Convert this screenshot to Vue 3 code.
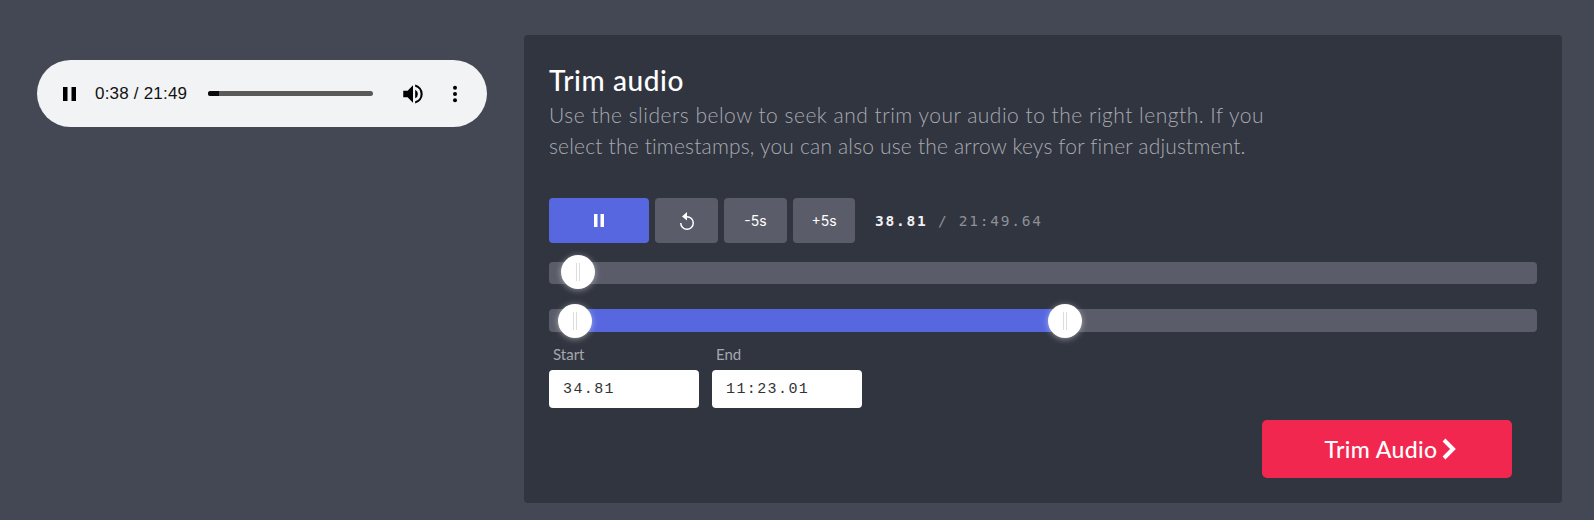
<template>
  <div class="page">
    <div class="left">
      <div class="player">
        <svg class="p-pause" width="13" height="14" viewBox="0 0 13 14"><path d="M0 0h4.500v14H0zM8.500 0H13v14H8.500z" fill="#000"/></svg>
        <span class="p-time">0:38 / 21:49</span>
        <div class="p-track"><div class="p-fill"></div></div>
        <svg class="p-vol" width="26" height="26" viewBox="0 0 24 24"><path d="M3 9v6h4l5 5V4L7 9H3zm13.500 3A4.500 4.500 0 0 0 14 7.970v8.050A4.470 4.470 0 0 0 16.500 12zM14 3.230v2.060a7 7 0 0 1 0 13.420v2.060a9 9 0 0 0 0-17.540z" fill="#000"/></svg>
        <svg class="p-more" width="6" height="18" viewBox="0 0 6 18"><circle cx="3" cy="2.700" r="2"/><circle cx="3" cy="9" r="2"/><circle cx="3" cy="15.300" r="2"/></svg>
      </div>
    </div>
    <section class="panel">
      <h1>Trim audio</h1>
      <p class="desc"><span class="line1">Use the sliders below to seek and trim your audio to the right length. If you</span><span class="line2">select the timestamps, you can also use the arrow keys for finer adjustment.</span></p>
      <div class="controls">
        <button class="btn play"><svg width="12" height="13" viewBox="0 0 12 13"><path d="M1 0h3.500v13H1zM7.500 0H11v13H7.500z" fill="#fff"/></svg></button>
        <button class="btn replay"><svg width="18" height="20" viewBox="0 0 18 20"><path d="M9 5V1L4 5.500 9 9.500V6.500a5.500 5.500 0 1 1-5.500 5.500H2a7 7 0 1 0 7-7z" fill="#fff"/></svg></button>
        <button class="btn minus">-5s</button>
        <button class="btn plus">+5s</button>
        <span class="clock"><b>38.81</b> / 21:49.64</span>
      </div>
      <div class="slider seek">
        <div class="thumb" :style="{ left: '29px' }"></div>
      </div>
      <div class="slider range">
        <div class="fill" :style="{ left: '26px', width: '490px' }"></div>
        <div class="thumb" :style="{ left: '26px' }"></div>
        <div class="thumb" :style="{ left: '516px' }"></div>
      </div>
      <div class="fields">
        <label class="field"><span>Start</span><input value="34.81" /></label>
        <label class="field"><span>End</span><input value="11:23.01" /></label>
      </div>
      <div class="actions">
        <button class="trim">Trim Audio<svg width="18" height="24" viewBox="0 0 18 24"><path d="M4 3l9 9-9 9" fill="none" stroke="#fff" stroke-width="4"/></svg></button>
      </div>
    </section>
  </div>
</template>

<script setup>
</script>

<style>
html, body { margin: 0; background: #434854; }
</style>

<style scoped>
.page {
  box-sizing: border-box;
  width: 1594px;
  height: 520px;
  padding: 35px 33px 17px 37px;
  display: flex;
  gap: 37px;
  background: #434854;
  overflow: hidden;
}
.left { width: 450px; flex: none; padding-top: 25px; }
.player {
  height: 67px;
  border-radius: 34px;
  background: #f1f3f4;
  display: flex;
  align-items: center;
  padding-left: 26px;
  box-sizing: border-box;
  font-family: "Liberation Sans", Arial, sans-serif;
}
.p-pause { flex: none; }
.p-time { margin-left: 19px; font-size: 17px; letter-spacing: .2px; color: #111; white-space: nowrap; width: 113px; flex: none; }
.p-track { width: 165px; height: 5px; border-radius: 3px; background: #595959; flex: none; position: relative; overflow: hidden; }
.p-fill { width: 11px; height: 100%; background: #0b0b0b; }
.p-vol { margin-left: 27px; flex: none; }
.p-more { margin-left: 26px; flex: none; }

.panel {
  flex: 1;
  box-sizing: border-box;
  background: #313540;
  border-radius: 4px;
  padding: 26px 25px 25px;
  font-family: "Lato", "Open Sans", sans-serif;
  color: #fff;
  display: flex;
  flex-direction: column;
}
h1 { margin: 0; font-size: 28px; font-weight: 500; letter-spacing: .6px; line-height: 39px; color: #fff; }
.desc { margin: 0; font-size: 21px; line-height: 30.500px; color: #a8aab1; font-weight: 300; white-space: nowrap; }
.line1 { display: block; letter-spacing: .5px; }
.line2 { display: block; letter-spacing: .18px; }
.controls { display: flex; align-items: center; gap: 6px; margin-top: 37px; height: 45px; }
.btn {
  height: 45px;
  border: 0;
  border-radius: 4px;
  background: #5a5d69;
  color: #fff;
  padding: 0;
  display: flex;
  align-items: center;
  justify-content: center;
  font-family: "Inter", sans-serif;
  font-size: 14px;
}
.play { width: 100px; background: #5767e0; }
.replay { width: 63px; }
.minus { width: 63px; }
.plus { width: 62px; }
.clock { margin-left: 14px; font-family: "DejaVu Sans Mono", monospace; font-size: 14.500px; letter-spacing: 1.750px; color: #8e9097; }
.clock b { color: #f1f1f3; }
.slider { position: relative; height: 22px; background: #5a5d69; border-radius: 4px; width: 988px; }
.seek { margin-top: 19px; }
.range { margin-top: 25px; height: 23px; }
.fill { position: absolute; top: 0; bottom: 0; background: #5767e0; }
.thumb {
  position: absolute;
  top: 50%;
  width: 34px;
  height: 34px;
  margin-left: -17px;
  margin-top: -17px;
  border-radius: 50%;
  background: #fff;
  box-shadow: 0 1px 6px rgba(255,255,255,.45);
}
.seek .thumb { margin-top: -18px; }
.thumb::after {
  content: "";
  position: absolute;
  left: 15px;
  top: 8px;
  width: 2px;
  height: 18px;
  border-left: 1px solid #ddd;
  border-right: 1px solid #ddd;
}
.fields { display: flex; gap: 13px; margin-top: 14px; }
.field { display: flex; flex-direction: column; width: 150px; }
.field span { font-size: 15px; line-height: 18px; color: #a5a7ae; padding-left: 4px; margin-bottom: 7px; margin-top: -1px; }
.field input {
  box-sizing: border-box;
  width: 150px;
  height: 38px;
  border: 0;
  border-radius: 4px;
  background: #fff;
  padding: 0 14px;
  font-family: "Liberation Mono", monospace;
  font-size: 15px;
  letter-spacing: 1.400px;
  color: #333;
  outline: none;
}
.actions { display: flex; justify-content: flex-end; padding-right: 25px; margin-top: 12px; }
.trim {
  width: 250px;
  height: 58px;
  border: 0;
  border-radius: 5px;
  background: #f1274f;
  color: #fff;
  padding: 0 0 0 8px;
  font-family: "Lato", sans-serif;
  font-size: 23px;
  font-weight: 500;
  letter-spacing: .4px;
  display: flex;
  align-items: center;
  justify-content: center;
  gap: 2px;
}
</style>
